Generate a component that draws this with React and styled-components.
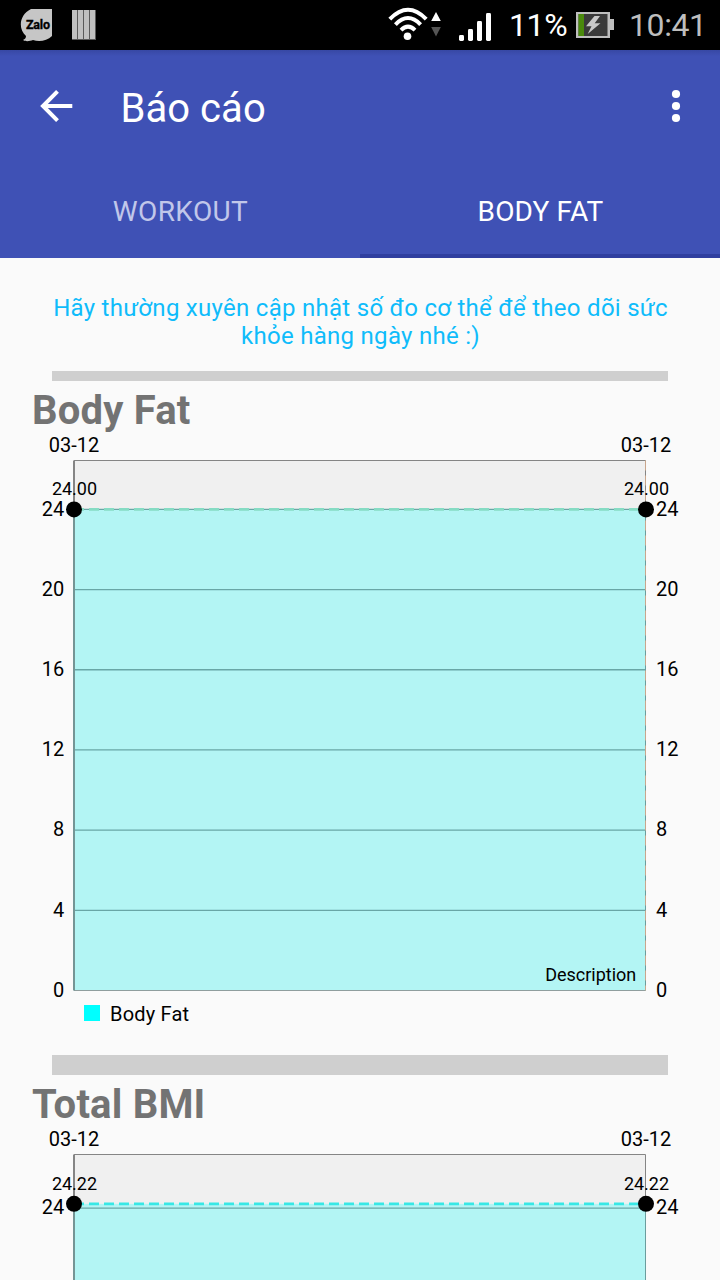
import React from 'react';
import styled, { createGlobalStyle } from 'styled-components';

const GlobalStyle = createGlobalStyle`
  * { box-sizing: border-box; }
  body {
    margin: 0;
    background: #fafafa;
    font-family: Roboto, "Noto Sans", sans-serif;
    overflow: hidden;
  }
`;

const Screen = styled.div`
  width: 720px;
  height: 1280px;
  overflow: hidden;
  display: flex;
  flex-direction: column;
  background: #fafafa;
`;

const StatusBar = styled.header`
  flex: none;
  height: 50px;
  display: flex;
  align-items: center;
  justify-content: space-between;
  padding: 0 15px 0 20px;
  background: #000;
`;

const StatusGroup = styled.div`
  display: flex;
  align-items: center;
  height: 50px;
  svg { display: block; flex: none; }
`;

const StatusIconSlot = styled.div`
  display: flex;
  margin: ${({ $margin }) => $margin};
`;

const StatusText = styled.span`
  font-size: 32px;
  line-height: 50px;
  letter-spacing: -0.4px;
  width: ${({ $width }) => $width};
  margin-left: ${({ $gap }) => $gap};
  color: ${({ $color }) => $color};
  white-space: nowrap;
`;

const AppHeader = styled.div`
  flex: none;
  height: 208px;
  background: linear-gradient(#3748a4 0, #3f51b5 6px);
`;

const Toolbar = styled.div`
  height: 112px;
  display: flex;
  align-items: center;
  padding: 0 38px 0 40px;
`;

const IconButton = styled.button`
  display: flex;
  padding: 0;
  border: 0;
  background: none;
`;

const Title = styled.h1`
  flex: 1;
  margin: 5px 0 0 44.5px;
  font-size: 40px;
  font-weight: 400;
  line-height: 48px;
  letter-spacing: 0.05px;
  color: #fff;
`;

const Tabs = styled.nav`
  display: flex;
  height: 96px;
`;

const Tab = styled.div`
  flex: 1;
  display: flex;
  align-items: center;
  justify-content: center;
  padding: 6px 0 0 1px;
  border-bottom: 4px solid ${({ $active }) => ($active ? '#303f9f' : 'transparent')};
  color: ${({ $active }) => ($active ? '#fff' : '#c1c7ea')};
  font-size: 28px;
  letter-spacing: ${({ $spacing }) => $spacing};
`;

const Content = styled.main`
  padding-top: 36px;
`;

const Hint = styled.p`
  margin: 0 39px 0 40px;
  font-size: 24px;
  line-height: 28px;
  letter-spacing: 0.28px;
  text-align: center;
  color: #0fbcfb;
`;

const Divider = styled.div`
  height: ${({ $height }) => $height}px;
  margin: ${({ $top }) => $top}px 52px 0;
  background: #cfcfcf;
`;

const Section = styled.section`
  display: flex;
  flex-direction: column;
`;

const SectionTitle = styled.h2`
  margin: 5px 0 0 32px;
  height: 47px;
  font-size: 40px;
  font-weight: 700;
  line-height: 50px;
  letter-spacing: 0.2px;
  color: #737373;
`;

const ChartSvg = styled.svg`
  display: block;
  fill: #000;
  .axis { font-size: 20px; }
  .value { font-size: 18px; }
  .name { font-size: 20px; letter-spacing: 0.2px; }
`;

const ZaloIcon = () => (
  <svg width="32" height="34" viewBox="0 0 32 34">
    <path d="M11 1H32V28C27 33 19 34 13 32C10 33 6 34 3 32C5 31 6 30 6 28C-2 21-1 7 11 1Z" fill="#c6c6c6" />
    <text x="6" y="20.5" fontSize="12.5" fontWeight="700" fill="#000" stroke="#000" strokeWidth=".3" textLength="24">Zalo</text>
  </svg>
);

const StripesIcon = () => (
  <svg width="24" height="32" viewBox="0 0 24 32">
    <rect y="1" width="24" height="30" fill="#5a5a5a" />
    {[0, 6, 12, 18].map((x) => (
      <rect key={x} x={x} y="1" width="5" height="29" fill="#c0c0c0" />
    ))}
  </svg>
);

const WifiIcon = () => (
  <svg width="54" height="36" viewBox="0 0 54 36" fill="none" stroke="#fff" strokeWidth="4">
    <path d="M1.8 12.2Q20 -6.5 38.2 12.2" />
    <path d="M7.4 17.6Q20 4.6 32.6 17.6" />
    <path d="M13 23.2Q20 16.2 27 23.2" />
    <circle cx="19.5" cy="29.3" r="3.8" fill="#fff" stroke="none" />
    <path d="M48 5L52.8 14H43.2Z" fill="#fff" stroke="none" />
    <path d="M43.2 20H52.8L48 29.5Z" fill="#555" stroke="none" />
  </svg>
);

const SignalIcon = () => (
  <svg width="33" height="30" viewBox="0 0 33 30" fill="#fff">
    <rect x="0" y="23" width="5" height="6" rx="1.4" />
    <rect x="9" y="17" width="5" height="12" rx="1.4" />
    <rect x="18" y="9" width="5" height="20" rx="1.4" />
    <rect x="27" y="1" width="5" height="28" rx="1.4" />
  </svg>
);

const BatteryIcon = () => (
  <svg width="38" height="26" viewBox="0 0 38 26">
    <path d="M0 0H34V7H38V18H34V26H0Z" fill="#bebebe" />
    <rect x="2.5" y="2" width="29" height="22" fill="#3a3a3a" />
    <rect x="2.5" y="2" width="5.5" height="22" fill="#4a8a0c" />
    <path d="M18.5 4L10 14.2H15.5L11.7 22L24.5 11.2H18.7L24 4Z" fill="#c8c8c8" />
  </svg>
);

const BackIcon = () => (
  <svg width="36" height="36" viewBox="0 0 36 36" fill="none" stroke="#fff" strokeWidth="4">
    <path d="M17.5 3.4L3 18L17.5 32.6M3 18H32.3" />
  </svg>
);

const MoreIcon = () => (
  <svg width="12" height="36" viewBox="0 0 12 36" fill="#fff">
    <circle cx="6" cy="6" r="4.1" />
    <circle cx="6" cy="18" r="4.1" />
    <circle cx="6" cy="30" r="4.1" />
  </svg>
);

const LEFT = 74;
const RIGHT = 645.5;
const TOP = 27.5;
const BOTTOM = 557.5;

function Chart({ value, tickTop, ticks, legend, date, marked, height }) {
  const scale = (BOTTOM - tickTop) / 24;
  const y = (v) => BOTTOM - v * scale;
  const pointY = y(value);
  const label = value.toFixed(2);
  return (
    <ChartSvg width="720" height={height} viewBox={`0 0 720 ${height}`}>
      <rect x={LEFT} y={TOP} width={RIGHT - LEFT} height={BOTTOM - TOP} fill="#f0f0f0" />
      <rect x={LEFT} y={pointY} width={RIGHT - LEFT} height={BOTTOM - pointY} fill="#b3f5f4" />
      {ticks.map((t) => (
        <line key={t} x1={LEFT} x2={RIGHT} y1={y(t)} y2={y(t)} stroke={t ? '#69a6a6' : '#8f9e9e'} strokeWidth={t ? 1.3 : 1} />
      ))}
      <path d={`M${LEFT} ${TOP}H${RIGHT}`} stroke="#858585" />
      <path d={`M${RIGHT} ${TOP}V${pointY}`} stroke="#858585" />
      <path d={`M${RIGHT} ${pointY}V${BOTTOM}`} stroke="#6b9d9d" />
      {marked && (
        <path d={`M${RIGHT} ${TOP}V${BOTTOM}`} stroke="#c9a68c" strokeDasharray="10 5" />
      )}
      <path d={`M${LEFT} ${TOP}V${pointY}`} stroke="#858585" strokeWidth="2" />
      <path d={`M${LEFT} ${pointY}V${BOTTOM}`} stroke="#749595" strokeWidth="2" />
      <path
        d={`M${LEFT} ${pointY}H${RIGHT}`}
        stroke={marked ? '#86dcc4' : '#38e8e6'}
        strokeWidth="2.8"
        strokeDasharray="10 5"
      />
      {[LEFT, 646].map((x) => (
        <g key={x} textAnchor="middle">
          <text className="axis" x={x} y="19">{date}</text>
          <text className="value" x={x + 0.5} y={pointY - 14}>{label}</text>
          <circle cx={x} cy={pointY} r="8" />
        </g>
      ))}
      {ticks.map((t) => (
        <g key={t} className="axis">
          <text x="64.3" y={y(t) + 6.2} textAnchor="end">{t}</text>
          <text x="656" y={y(t) + 6.2}>{t}</text>
        </g>
      ))}
      {legend && (
        <g>
          <text className="value" x="636.3" y="548" textAnchor="end">Description</text>
          <rect x="84" y="572" width="16" height="16" fill="#00ffff" />
          <text className="name" x="110" y="588">{legend}</text>
        </g>
      )}
    </ChartSvg>
  );
}

export default function App() {
  return (
    <Screen>
      <GlobalStyle />
      <StatusBar>
        <StatusGroup>
          <ZaloIcon />
          <StatusIconSlot $margin="0 0 0 20px"><StripesIcon /></StatusIconSlot>
        </StatusGroup>
        <StatusGroup>
          <WifiIcon />
          <StatusIconSlot $margin="3px 0 0 17px"><SignalIcon /></StatusIconSlot>
          <StatusText $gap="17px" $width="58px" $color="#fff">11%</StatusText>
          <StatusIconSlot $margin="0 0 0 9px"><BatteryIcon /></StatusIconSlot>
          <StatusText $gap="15px" $width="76px" $color="#bebebe">10:41</StatusText>
        </StatusGroup>
      </StatusBar>
      <AppHeader>
        <Toolbar>
          <IconButton aria-label="Back"><BackIcon /></IconButton>
          <Title>Báo cáo</Title>
          <IconButton aria-label="More"><MoreIcon /></IconButton>
        </Toolbar>
        <Tabs>
          <Tab $spacing="0.4px">WORKOUT</Tab>
          <Tab $spacing="0.15px" $active>BODY FAT</Tab>
        </Tabs>
      </AppHeader>
      <Content>
        <Hint>Hãy thường xuyên cập nhật số đo cơ thể để theo dõi sức khỏe hàng ngày nhé :)</Hint>
        <Section>
          <Divider $height={10} $top={21} />
          <SectionTitle>Body Fat</SectionTitle>
          <Chart
            value={24}
            tickTop={76.4}
            ticks={[24, 20, 16, 12, 8, 4, 0]}
            legend="Body Fat"
            date="03-12"
            height={602}
            marked
          />
        </Section>
        <Section>
          <Divider $height={20} $top={20} />
          <SectionTitle>Total BMI</SectionTitle>
          <Chart value={24.22} tickTop={81.2} ticks={[24]} date="03-12" height={153} />
        </Section>
      </Content>
    </Screen>
  );
}
